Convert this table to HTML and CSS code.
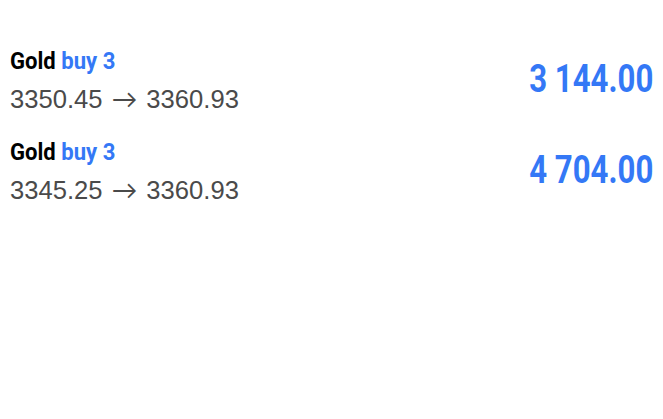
FILE: index.html
```html
<!DOCTYPE html>
<html>
<head>
<meta charset="utf-8">
<link rel="stylesheet" href="styles.css">
</head>
<body>
<div class="list">
  <div class="row">
    <div class="info">
      <div class="title">Gold <span class="side">buy 3</span></div>
      <div class="prices">3350.45 <span class="arrow">→</span> 3360.93</div>
    </div>
    <div class="profit">3 144.00</div>
  </div>
  <div class="row">
    <div class="info">
      <div class="title">Gold <span class="side">buy 3</span></div>
      <div class="prices">3345.25 <span class="arrow">→</span> 3360.93</div>
    </div>
    <div class="profit">4 704.00</div>
  </div>
</div>
</body>
</html>
```

FILE: styles.css
```css
html, body {
  margin: 0;
  padding: 0;
  background: #ffffff;
}
.list {
  padding: 44px 10px 0 10px;
  display: flex;
  flex-direction: column;
  gap: 16px;
}
.row {
  display: flex;
  justify-content: space-between;
  align-items: flex-start;
}
.info {
  display: flex;
  flex-direction: column;
}
.title {
  font-family: Roboto, sans-serif;
  font-weight: 700;
  font-size: 24px;
  line-height: 34px;
  color: #000;
  transform: scaleX(0.92);
  transform-origin: left center;
  white-space: nowrap;
}
.side {
  color: #3478f6;
}
.prices {
  font-family: "Liberation Sans", Arial, sans-serif;
  font-size: 25.6px;
  line-height: 40px;
  color: #4a4a4a;
  white-space: nowrap;
  word-spacing: 2px;
}
.arrow {
  font-family: Lato, "Noto Sans CJK JP", sans-serif;
}
.profit {
  font-family: Roboto, sans-serif;
  font-weight: 700;
  font-size: 38px;
  line-height: 44px;
  margin-top: 13px;
  color: #3478f6;
  transform: scaleX(0.82);
  transform-origin: right center;
  white-space: nowrap;
}
```
